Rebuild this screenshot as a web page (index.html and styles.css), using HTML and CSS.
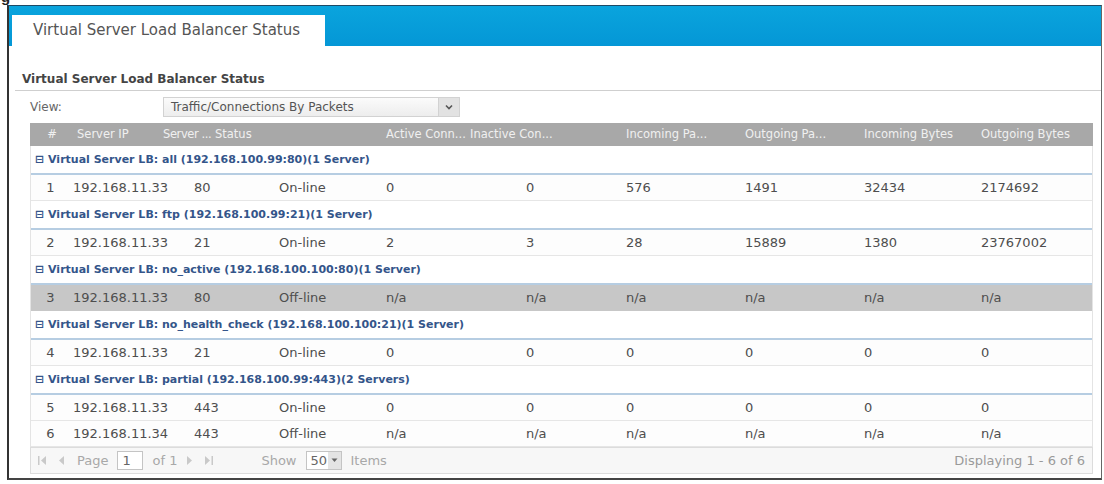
FILE: index.html
```html
<!DOCTYPE html>
<html lang="en">
<head>
  <meta charset="UTF-8" />
  <title>Virtual Server Load Balancer Status</title>
  <link rel="stylesheet" href="styles.css">
</head>
<body>
  <div class="caption"><span>g</span></div>

  <div class="frame">
    <div class="tabbar">
      <div class="tab">Virtual Server Load Balancer Status</div>
    </div>

    <h2 class="section-title">Virtual Server Load Balancer Status</h2>

    <div class="view-row">
      <span class="view-label">View:</span>
      <div class="select">
        <span>Traffic/Connections By Packets</span>
        <span class="select-btn">
          <svg width="8" height="6" viewBox="0 0 8 6"><path d="M1 1.5 L4 4.5 L7 1.5" fill="none" stroke="#555" stroke-width="1.6"/></svg>
        </span>
      </div>
    </div>

    <div class="grid">
      <div class="grid-head">
        <div class="c-num">#</div>
        <div>Server IP</div>
        <div class="tight">Server ...</div>
        <div>Status</div>
        <div>Active Conn...</div>
        <div>Inactive Con...</div>
        <div>Incoming Pa...</div>
        <div>Outgoing Pa...</div>
        <div>Incoming Bytes</div>
        <div>Outgoing Bytes</div>
      </div>

      <div class="rows">
        <div class="group">&#8863; Virtual Server LB: all (192.168.100.99:80)(1 Server)</div>
        <div class="row">
          <div class="c-num">1</div><div>192.168.11.33</div><div>80</div><div>On-line</div>
          <div>0</div><div>0</div><div>576</div><div>1491</div><div>32434</div><div>2174692</div>
        </div>

        <div class="group">&#8863; Virtual Server LB: ftp (192.168.100.99:21)(1 Server)</div>
        <div class="row">
          <div class="c-num">2</div><div>192.168.11.33</div><div>21</div><div>On-line</div>
          <div>2</div><div>3</div><div>28</div><div>15889</div><div>1380</div><div>23767002</div>
        </div>

        <div class="group">&#8863; Virtual Server LB: no_active (192.168.100.100:80)(1 Server)</div>
        <div class="row selected">
          <div class="c-num">3</div><div>192.168.11.33</div><div>80</div><div>Off-line</div>
          <div>n/a</div><div>n/a</div><div>n/a</div><div>n/a</div><div>n/a</div><div>n/a</div>
        </div>

        <div class="group">&#8863; Virtual Server LB: no_health_check (192.168.100.100:21)(1 Server)</div>
        <div class="row">
          <div class="c-num">4</div><div>192.168.11.33</div><div>21</div><div>On-line</div>
          <div>0</div><div>0</div><div>0</div><div>0</div><div>0</div><div>0</div>
        </div>

        <div class="group">&#8863; Virtual Server LB: partial (192.168.100.99:443)(2 Servers)</div>
        <div class="row">
          <div class="c-num">5</div><div>192.168.11.33</div><div>443</div><div>On-line</div>
          <div>0</div><div>0</div><div>0</div><div>0</div><div>0</div><div>0</div>
        </div>
        <div class="row">
          <div class="c-num">6</div><div>192.168.11.34</div><div>443</div><div>Off-line</div>
          <div>n/a</div><div>n/a</div><div>n/a</div><div>n/a</div><div>n/a</div><div>n/a</div>
        </div>
      </div>

      <div class="pager">
        <div class="pager-left">
          <svg class="pg-icon" width="9" height="9" viewBox="0 0 9 9"><rect x="0" y="0" width="1.5" height="9" fill="#c9c9c9"/><path d="M8 0 L3 4.5 L8 9 Z" fill="#c9c9c9"/></svg>
          <svg class="pg-icon" width="6" height="9" viewBox="0 0 6 9"><path d="M5 0 L0 4.5 L5 9 Z" fill="#c9c9c9"/></svg>
          <span class="pg-text">Page</span>
          <span class="pg-input">1</span>
          <span class="pg-text">of 1</span>
          <svg class="pg-icon" width="6" height="9" viewBox="0 0 6 9"><path d="M1 0 L6 4.5 L1 9 Z" fill="#c9c9c9"/></svg>
          <svg class="pg-icon" width="9" height="9" viewBox="0 0 9 9"><path d="M1 0 L6 4.5 L1 9 Z" fill="#c9c9c9"/><rect x="7.5" y="0" width="1.5" height="9" fill="#c9c9c9"/></svg>
          <span class="pg-text show">Show</span>
          <span class="pg-select">50<span class="pg-select-btn"><svg width="7" height="5" viewBox="0 0 7 5"><path d="M0.5 0.5 L3.5 4 L6.5 0.5 Z" fill="#666"/></svg></span></span>
          <span class="pg-text">Items</span>
        </div>
        <div class="pager-right">Displaying 1 - 6 of 6</div>
      </div>
    </div>
  </div>
</body>
</html>
```

FILE: styles.css
```css
body {
  margin: 0;
  font-family: "DejaVu Sans", sans-serif;
  background: #fff;
  color: #444;
}

.caption {
  height: 5px;
  overflow: hidden;
  padding-left: 1px;
}

.caption span {
  display: block;
  margin-top: -11px;
  font: bold 15px/15px "Liberation Sans", sans-serif;
  color: #222;
}

.frame {
  margin-left: 7px;
  width: 1095px;
  height: 475px;
  box-sizing: border-box;
  border: 1px solid #666;
  border-top-color: #1d4a66;
  border-left: 2px solid #333;
  border-bottom: 2px solid #444;
}

.tabbar {
  height: 40px;
  box-sizing: border-box;
  padding: 9px 0 0 3px;
  background: linear-gradient(#0aa4dd, #0497d6);
}

.tab {
  width: 313px;
  height: 31px;
  box-sizing: border-box;
  padding-left: 21px;
  background: #fff;
  font-size: 15px;
  line-height: 31px;
  color: #555;
}

.section-title {
  margin: 0 0 0 6px;
  padding: 25px 0 3px 7px;
  font-size: 12px;
  font-weight: bold;
  line-height: 16px;
  color: #444;
  border-bottom: 1px solid #cfcfcf;
}

.view-row {
  display: flex;
  align-items: center;
  height: 20px;
  margin: 6px 0 0 21px;
}

.view-label {
  width: 133px;
  font-size: 12px;
  color: #666;
}

.select {
  display: flex;
  justify-content: space-between;
  align-items: center;
  width: 297px;
  height: 20px;
  box-sizing: border-box;
  padding-left: 7px;
  border: 1px solid #d2d2d2;
  background: linear-gradient(#fbfbfb, #ededed);
  font-size: 12px;
  color: #555;
}

.select-btn {
  display: flex;
  align-items: center;
  justify-content: center;
  width: 20px;
  height: 18px;
  background: #e2e2e2;
  border-left: 1px solid #d2d2d2;
}

.grid {
  width: 1063px;
  margin: 6px 0 0 21px;
}

.grid-head {
  display: grid;
  grid-template-columns: 44px 86px 52px 171px 84px 156px 119px 119px 117px 115px;
  height: 23px;
  background: #a8a8a8;
  color: #f0f0f0;
  font-size: 11.5px;
  line-height: 23px;
  white-space: nowrap;
}

.grid-head > div {
  padding-left: 3px;
}

.grid-head > .c-num {
  padding-left: 0;
  text-align: center;
}

.grid-head > .tight {
  letter-spacing: -0.4px;
}

.rows {
  border-left: 1px solid #e4e4e4;
  border-right: 1px solid #e4e4e4;
}

.group {
  height: 29px;
  box-sizing: border-box;
  padding-left: 4px;
  border-bottom: 2px solid #b6cde2;
  font-size: 11px;
  font-weight: bold;
  line-height: 27px;
  color: #34558a;
  white-space: nowrap;
}

.row {
  display: grid;
  grid-template-columns: 39px 121px 85px 107px 140px 100px 119px 119px 117px 114px;
  height: 26px;
  box-sizing: border-box;
  border-bottom: 1px solid #e6e6e6;
  background: #fdfdfd;
  font-size: 13px;
  line-height: 25px;
  color: #4e4e4e;
  white-space: nowrap;
}

.row > div {
  padding-left: 3px;
}

.row > .c-num {
  padding-left: 0;
  text-align: center;
}

.row.selected {
  background: #c7c7c7;
  border-bottom-color: #c7c7c7;
}

.pager {
  display: flex;
  justify-content: space-between;
  align-items: center;
  height: 27px;
  box-sizing: border-box;
  border: 1px solid #dcdcdc;
  background: #f7f7f7;
  font-size: 13px;
  color: #a8a8a8;
}

.pager-left {
  display: flex;
  align-items: center;
  gap: 9px;
  padding-left: 7px;
}

.pg-icon {
  margin-right: 3px;
}

.pg-input {
  width: 26px;
  height: 19px;
  box-sizing: border-box;
  padding-left: 4px;
  border: 1px solid #c4c4c4;
  background: #fff;
  line-height: 17px;
  color: #666;
}

.show {
  margin-left: 36px;
}

.pg-select {
  display: flex;
  align-items: center;
  justify-content: space-between;
  width: 36px;
  height: 19px;
  box-sizing: border-box;
  padding-left: 4px;
  border: 1px solid #c4c4c4;
  background: #fff;
  color: #666;
}

.pg-select-btn {
  display: flex;
  align-items: center;
  justify-content: center;
  width: 13px;
  height: 17px;
  background: #e4e4e4;
}

.pager-right {
  padding-right: 7px;
  color: #9a9a9a;
}
```
